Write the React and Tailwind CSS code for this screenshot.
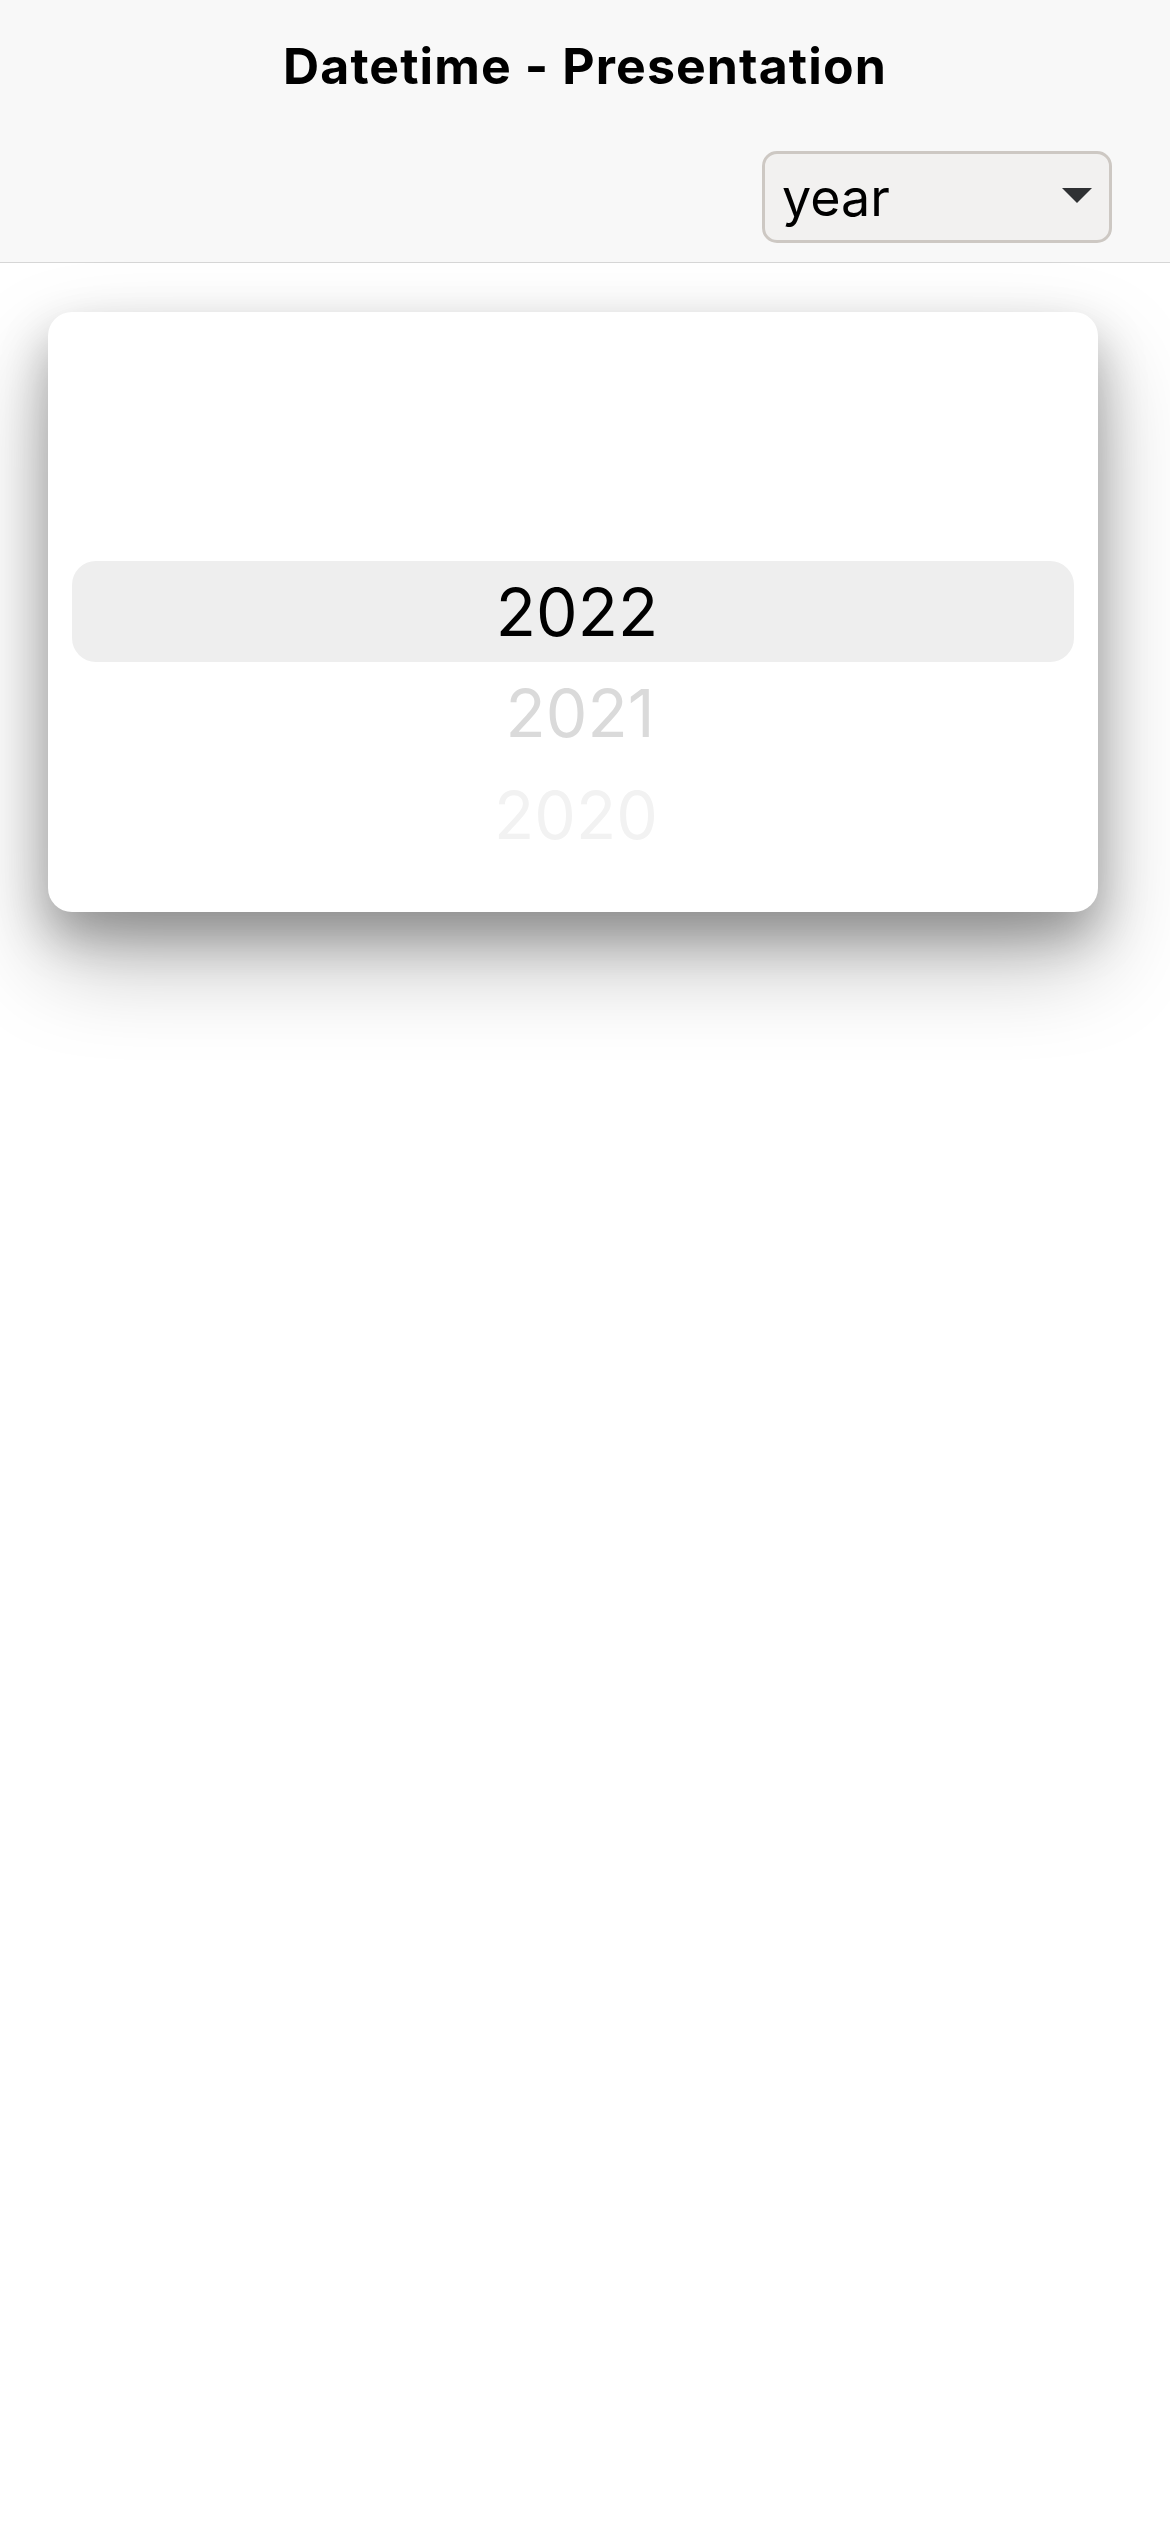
export default function App() {
  return (
    <div className="w-full min-h-[2535px] bg-white" style={{ fontFamily: "Inter, 'Noto Sans', sans-serif" }}>
      <header className="bg-[#f8f8f8] border-b border-[#d6d6d6]">
        <div className="h-[132px] flex items-center justify-center">
          <h1 className="text-[50px] font-bold text-black tracking-[1.1px]">Datetime - Presentation</h1>
        </div>
        <div className="h-[130px] flex items-center justify-end pr-[58px]">
          <div className="w-[350px] h-[92px] border-[3px] border-[#cdc8c3] rounded-[15px] bg-[#f2f1f0] flex items-center justify-between pl-[17px] pr-[17px]">
            <span className="text-[52px] text-black leading-none pt-[2px]">year</span>
            <svg width="30" height="16" viewBox="0 0 30 16" className="mb-[2px]">
              <polygon points="0,0 30,0 15,15" fill="#2f3133" />
            </svg>
          </div>
        </div>
      </header>
      <main className="pt-[49px] pl-[48px]">
        <div className="w-[1050px] h-[600px] rounded-[24px] bg-white shadow-[0_48px_96px_rgba(0,0,0,0.27),0_24px_48px_rgba(0,0,0,0.27)] overflow-hidden">
          <div className="pt-[249px] flex flex-col">
            <div className="mx-[24px] h-[101px] rounded-[24px] bg-[#eeeeee] flex items-center justify-center pl-[8px]">
              <span className="text-[66px] text-black leading-none">2022</span>
            </div>
            <div className="h-[102px] flex items-center justify-center pl-[14px]">
              <span className="text-[66px] text-[#dadada] leading-none">2021</span>
            </div>
            <div className="h-[102px] flex items-center justify-center pl-[6px]">
              <span className="text-[66px] text-[#f2f2f2] leading-none">2020</span>
            </div>
          </div>
        </div>
      </main>
    </div>
  );
}
